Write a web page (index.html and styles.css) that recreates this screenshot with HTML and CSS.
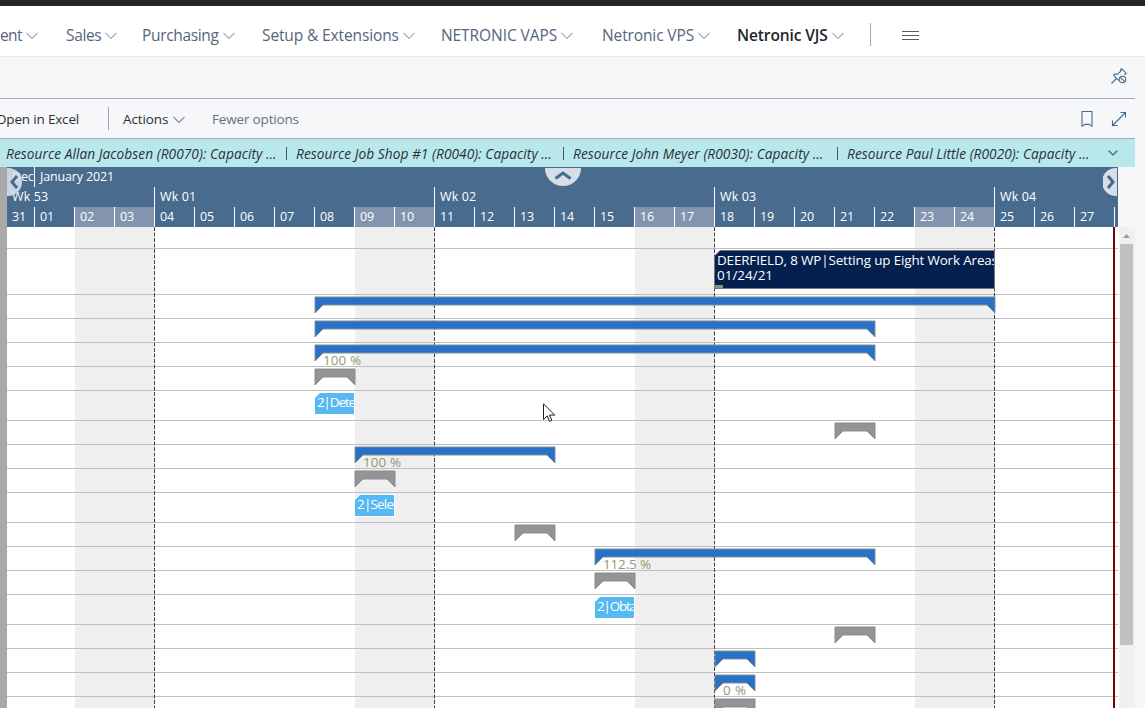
FILE: index.html
```
<!DOCTYPE html>
<html lang="en">
<head>
<meta charset="utf-8">
<title>Netronic VJS</title>
<link rel="stylesheet" href="styles.css">
</head>
<body>
<div class="topbar"></div>
<nav class="nav">
  <a class="n-ent"><span>ent</span><svg class="chev"><use href="#chev"/></svg></a>
  <a class="n-sales"><span>Sales</span><svg class="chev"><use href="#chev"/></svg></a>
  <a class="n-purch"><span>Purchasing</span><svg class="chev"><use href="#chev"/></svg></a>
  <a class="n-setup"><span>Setup &amp; Extensions</span><svg class="chev"><use href="#chev"/></svg></a>
  <a class="n-vaps"><span>NETRONIC VAPS</span><svg class="chev"><use href="#chev"/></svg></a>
  <a class="n-vps"><span>Netronic VPS</span><svg class="chev"><use href="#chev"/></svg></a>
  <a class="n-vjs active"><span>Netronic VJS</span><svg class="chev"><use href="#chev"/></svg></a>
  <i class="nav-sep"></i>
  <svg class="burger" width="17" height="9"><path d="M0 .5h17M0 4.5h17M0 8.5h17"/></svg>
</nav>
<div class="pinrow">
  <svg class="ico" width="16" height="16" viewBox="0 0 16 16"><path d="M.5 15.5 5.3 10.7M2.3 7.2l5.2 5.2M2.3 7.2C3.6 6 5.3 6 6.6 6.2L9.8 3.2 9.6 1.5 10.6.8 15.2 5.2 14.4 6.3 12.8 6.2"/><circle cx="11.5" cy="11.5" r="3.2"/><path d="M9.3 9.3l4.4 4.4"/></svg>
</div>
<div class="actions">
  <span class="a-excel">Open in Excel</span>
  <i class="a-sep"></i>
  <span class="a-act">Actions</span><svg class="chev dark"><use href="#chev"/></svg>
  <span class="a-few">Fewer options</span>
  <svg class="ico book" width="12" height="16"><path d="M1 .5h10v14.7L8 13.4H4L1 15.2z"/></svg>
  <svg class="ico" width="16" height="16"><path d="M1.5 14.5l13-13M9.5 1.5h5v5M1.5 9.5v5h5"/></svg>
</div>
<div class="notice">
  <span class="m m1">Resource Allan Jacobsen (R0070): Capacity ...</span><i></i>
  <span class="m m2">Resource Job Shop #1 (R0040): Capacity ...</span><i></i>
  <span class="m m3">Resource John Meyer (R0030): Capacity ...</span><i></i>
  <span class="m m4">Resource Paul Little (R0020): Capacity ...</span>
  <svg width="10" height="6"><path d="M.7.7 5 4.9 9.3.7"/></svg>
</div>
<main class="chart">
  <div class="splitter"></div>
  <div class="plan">
    <header class="scale">
      <div class="months"><span>Dec</span><span>January 2021</span></div>
      <div class="weeks"><span>Wk 53</span><span>Wk 01</span><span>Wk 02</span><span>Wk 03</span><span>Wk 04</span></div>
      <div class="days" id="days"></div>
      <svg class="btn left" width="15" height="28"><path class="disc" d="M0 0h1a14 14 0 0 1 0 28H0z"/><path class="arr" d="M10 8 5 14l5 6"/></svg>
      <svg class="btn up" width="36" height="18"><path class="disc" d="M0 0a18 18 0 0 0 36 0z"/><path class="arr" d="M10.5 10.5 18 5l7.500 5.500"/></svg>
      <svg class="btn right" width="15" height="28"><path class="disc" d="M14 0h-1a14 14 0 0 0 0 28h1z"/><path class="arr" d="M5 8l5 6-5 6"/></svg>
    </header>
    <svg class="body" id="body" width="1112" height="481" viewBox="7 227 1112 481"></svg>
  </div>
  <div class="scroll"><svg width="7" height="4"><path d="M0 4 3.500 0 7 4z"/></svg><b></b></div>
</main>
<svg class="cursor" width="13" height="20" viewBox="0 0 13 20"><path d="M.5.8v15.700l3.700-3.600 2.400 5.500 2.300-1-2.400-5.300h5.200z"/></svg>
<svg class="defs"><symbol id="chev" viewBox="0 0 12 8"><path d="M.5 1 6 6.500 11.500 1"/></symbol></svg>
<script src="chart.js"></script>
</body>
</html>
```
FILE: styles.css
```
* { box-sizing: border-box; }
body { margin: 0; width: 1145px; height: 708px; overflow: hidden; position: relative; background: #f6f7f9; font-family: "Open Sans", "Noto Sans", sans-serif; color: #2b3138; }
svg { display: block; flex: none; }
.defs { width: 0; height: 0; position: absolute; }
.topbar { height: 6px; background: #262626; }
.nav { height: 51px; background: #fff; border-bottom: 1px solid #e9e9e9; display: grid; grid-template-columns: 66px 77px 119px 179px 161px 136px 132px 32px auto; align-items: center; font-size: 15.500px; color: #55657c; }
.nav a { display: flex; align-items: center; gap: 4px; white-space: nowrap; line-height: 24px; padding-top: 8px; }
.chev { width: 12px; height: 8px; fill: none; stroke: #a8aeb6; stroke-width: 1.100; margin-top: 2px; }
.n-ent { letter-spacing: -.6px; }
.n-sales { letter-spacing: -.35px; }
.n-purch { letter-spacing: -.34px; margin-left: -1px; }
.n-setup { letter-spacing: -.12px; }
.n-vaps { letter-spacing: -.08px; }
.n-vps { letter-spacing: -.12px; }
.nav .active { color: #20262c; font-weight: 600; letter-spacing: -.12px; margin-left: -1px; }
.nav-sep { width: 1px; height: 23px; background: #a5a9b5; margin-top: 6px; }
.burger { stroke: #505c70; margin-top: 8px; }
.pinrow { height: 42px; width: 1135px; border-bottom: 1px solid #a7a8b8; display: flex; justify-content: flex-end; padding: 11px 8px 0 0; }
.ico { fill: none; stroke: #44698f; stroke-width: 1.100; }
.actions { height: 40px; width: 1135px; border-bottom: 1px solid #a7a8b8; display: flex; align-items: center; padding-right: 8px; font-size: 13.500px; white-space: nowrap; }
.a-excel { margin-left: -4px; width: 112px; letter-spacing: -.18px; }
.a-sep { width: 1px; height: 23px; background: #a0a4b5; margin-right: 14px; }
.a-act { letter-spacing: -.1px; width: 50px; }
.dark { stroke: #828a94; }
.a-few { margin-left: 27px; color: #66717e; letter-spacing: -.17px; }
.book { margin: 0 18px 0 auto; }
.notice { height: 28px; width: 1135px; background: #b8e8ec; display: flex; align-items: center; padding-left: 6px; font-size: 13.700px; font-style: italic; white-space: nowrap; }
.notice i { width: 1px; height: 13px; background: #49565c; }
.m1 { width: 280px; } .m2 { width: 267px; margin-left: 9px; } .m3 { width: 264px; margin-left: 9px; } .m4 { width: 261px; margin-left: 9px; }
.m { letter-spacing: .06px; }
.notice svg { fill: none; stroke: #3c6288; stroke-width: 1.300; }
.chart { display: flex; height: 541px; }
.splitter { width: 7px; background: #a9a9a9; }
.plan { width: 1112px; }
.scale { position: relative; width: 1111px; height: 60px; background: #486b8e; color: #fff; font-size: 12.500px; font-weight: 500; line-height: 19px; overflow: hidden; white-space: nowrap; }
.months, .weeks, .days { display: grid; height: 20px; }
.months { grid-template-columns: 27px 1fr; }
.weeks { grid-template-columns: 147px repeat(3, 280px) 1fr; }
.days { grid-template-columns: 27px repeat(27, 40px) 4px; }
.scale span { padding-left: 5px; overflow: hidden; letter-spacing: -.15px; border-left: 1px solid #fff; }
.scale span:first-child { border-left: 0; }
.scale .weeks span { letter-spacing: .15px; }
.days .we { background: #8395ae; }
.btn { position: absolute; top: 1px; }
.btn .disc { fill: #dce4ea; fill-opacity: .96; }
.left .disc { fill-opacity: .87; }
.btn .arr { fill: none; stroke: #456b90; stroke-width: 3; }
.left { left: 0; } .up { left: 537.500px; } .right { right: 0; }
.body { background: #fff; }
.body text { font-family: "Open Sans", "Noto Sans", sans-serif; font-size: 13.400px; fill: #fff; }
.body .pct { fill: #8f9876; }
.scroll { width: 16px; margin-top: 60px; background: #f0f0f0; padding: 7px 3px 0 1px; }
.scroll svg { margin-left: 3px; fill: #9c9c9c; }
.scroll b { display: block; width: 13px; height: 401px; margin-top: 6px; background: #c0c0c0; }
.cursor { position: absolute; left: 543px; top: 403px; fill: #fff; stroke: #222; }
```
FILE: chart.js
```
// Day labels of the time scale
const days = document.getElementById('days');
['31', ...Array.from({length: 27}, (_, i) => String(i + 1).padStart(2, '0')), ''].forEach(d => {
  const s = document.createElement('span');
  s.textContent = d;
  if (['02','03','09','10','16','17','23','24'].includes(d)) s.className = 'we';
  days.append(s);
});

const out = [];
const x = day => 34 + (day - 1) * 40;
[2, 9, 16, 23].forEach(d => out.push(`<rect x="${x(d) + 1}" y="227" width="79" height="481" fill="#efefef"/>`));
[248,294,318,342,366,390,420,444,468,492,522,546,570,594,624,648,672,696]
  .forEach(y => out.push(`<rect x="7" y="${y}" width="1111" height="1" fill="#bfbfbf"/>`));
[4, 11, 18, 25].forEach(d => out.push(`<path d="M${x(d) + .5} 227V708" stroke="#444" stroke-dasharray="4 1.500"/>`));

// Summary bar: row line y, first day, day after the last
const bar = (y, from, to, fill) => {
  const a = x(from) + 1, b = x(to) + 1, t = y + 3;
  out.push(`<path d="M${a} ${t}H${b}V${t + 16}L${b - 8} ${t + 8}H${a + 8}L${a} ${t + 16}Z" fill="${fill}" stroke="#888c8e"/>`);
};
const blue = '#2672c9', gray = '#939495';
bar(294, 8, 25, blue); bar(318, 8, 22, blue); bar(342, 8, 22, blue); bar(366, 8, 9, gray);
bar(420, 21, 22, gray); bar(444, 9, 14, blue); bar(468, 9, 10, gray); bar(522, 13, 14, gray);
bar(546, 15, 22, blue); bar(570, 15, 16, gray); bar(624, 21, 22, gray);
bar(648, 18, 19, blue); bar(672, 18, 19, blue); bar(696, 18, 19, gray);

const pct = (px, y, w, t) => out.push(`<text class="pct" x="${px}" y="${y}" textLength="${w}">${t}</text>`);
pct(323, 365, 38, '100 %'); pct(363, 467, 38, '100 %'); pct(603, 569, 48, '112.5 %'); pct(723, 695, 23, '0 %');

const task = (day, y, t, w) => {
  const a = x(day) + 1;
  out.push(`<path d="M${a + 5} ${y}H${a + 39}V${y + 21}H${a}V${y + 5}Z" fill="#56b9f2" stroke="#fff" stroke-width="2" paint-order="stroke"/>
  <svg x="${a}" y="${y}" width="39" height="21"><text x="2" y="14" textLength="${w}">${t}</text></svg>`);
};
task(8, 393, '2|Dete', 39); task(9, 495, '2|Sele', 37); task(15, 597, '2|Obta', 40);

out.push(`<path d="M720 250.500H994.500V288.500H714.500V256Z" fill="#04204f" stroke="#777"/>
<rect x="715" y="285" width="8" height="3" fill="#8f9088"/>
<svg x="715" y="250" width="279" height="38"><text x="2" y="15" textLength="281">DEERFIELD, 8 WP|Setting up Eight Work Areas</text><text x="2" y="30" textLength="56">01/24/21</text></svg>
<rect x="1113" y="227" width="2" height="481" fill="#760000"/>`);
document.getElementById('body').innerHTML = out.join('');
```
